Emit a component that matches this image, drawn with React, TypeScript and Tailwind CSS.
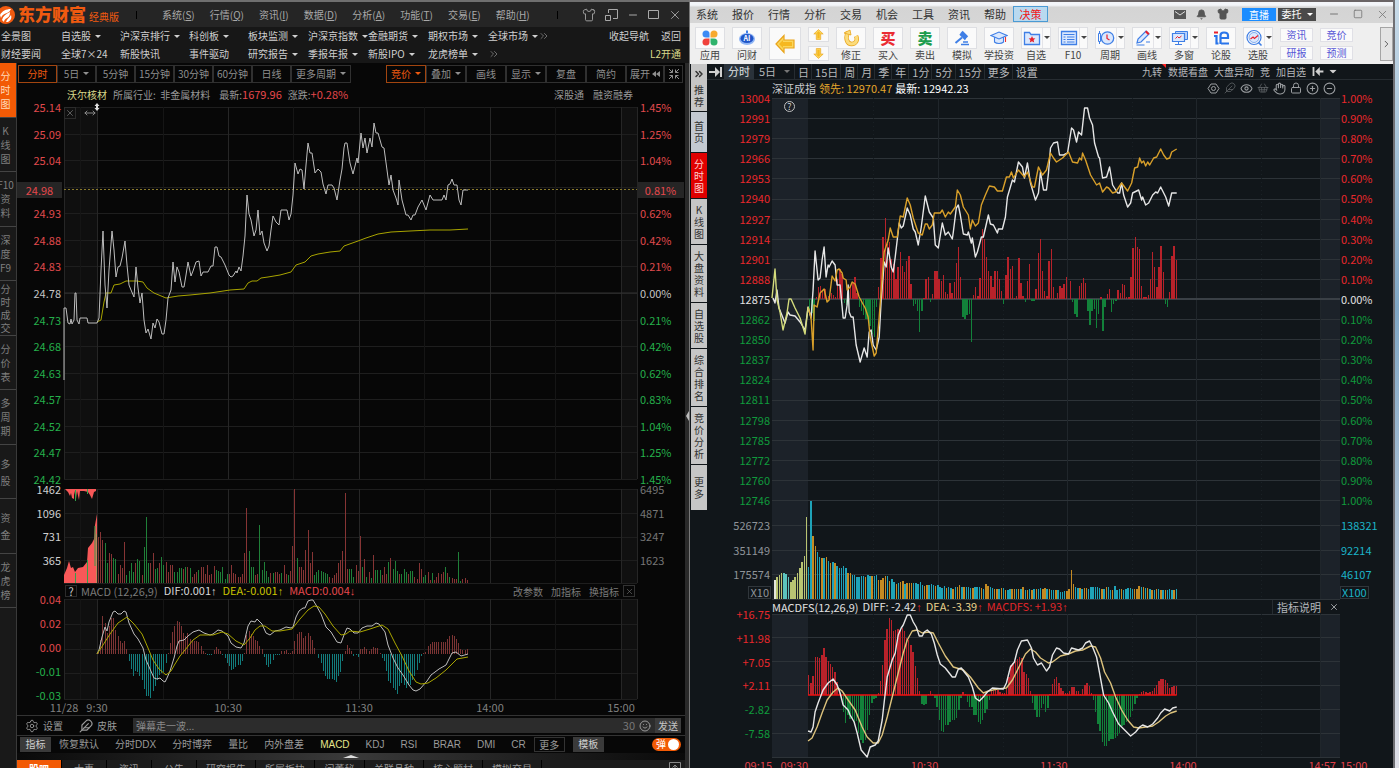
import React, { useState } from "react";
import {
  Bell,
  ChevronRight,
  ChevronsRight,
  CirclePlus,
  CircleMinus,
  Eye,
  Feather,
  Hand,
  Lock,
  Minus,
  MoveHorizontal,
  Settings,
  Shirt,
  ShoppingBasket,
  Smile,
  Square,
  X,
} from "lucide-react";

type NavItem = { label: string; menu?: boolean };

const range = (n: number) => Array.from({ length: n }, (_, i) => i);
const parse = (s: string) => s.trim().split(/\s+/);
const nums = (s: string) => parse(s).map(Number);

/* ---------- chart data ---------- */

const stockPrice =
  "64,380 64,308 66,308 68,323 70,324 71,319 72,324 74,320 75,293 76,293 77,320 79,324 80,318 87,318 88,323 97,323 99,318 101,270 103,231 105,285 107,308 109,270 112,231 114,250 116,277 118,267 120,266 122,258 125,241 127,265 129,285 131,290 134,297 136,267 138,288 140,303 142,293 144,320 146,333 148,329 151,339 153,323 155,328 157,319 159,322 162,334 164,334 166,320 168,298 171,290 173,262 175,282 177,267 179,272 182,287 184,287 186,275 188,262 191,276 193,271 196,262 199,261 201,276 203,272 208,272 211,266 213,266 215,247 217,247 219,256 221,257 225,265 229,275 231,277 233,276 236,271 237,273 239,267 241,271 243,256 245,236 247,195 249,214 251,220 254,236 256,230 258,210 260,235 262,231 264,243 267,251 269,246 271,230 273,216 276,222 279,225 281,210 287,210 289,220 291,214 293,195 295,163 298,174 300,169 302,170 304,189 306,165 308,143 310,153 312,153 315,173 318,169 321,172 323,184 326,194 328,185 332,185 334,188 337,200 340,180 342,169 344,148 345,143 347,143 350,163 353,174 357,158 358,163 361,133 363,148 365,138 367,153 370,138 372,147 374,123 376,133 378,133 382,147 384,148 387,170 389,185 391,175 393,190 396,198 398,205 399,180 402,200 406,215 408,215 411,220 413,215 415,215 418,207 422,200 426,210 430,195 433,200 442,200 444,195 446,200 448,185 450,184 452,179 454,185 457,185 459,200 461,205 463,190 468,190";

const stockAverage =
  "97,322 101,320 104,302 106,293 111,293 114,285 120,284 126,281 137,281 143,282 147,288 154,293 166,298 178,296 190,295 210,293 230,290 244,289 248,283 252,281 257,281 261,278 268,277 280,275 291,272 296,265 305,262 311,256 318,254 330,252 340,251 344,246 358,241 366,238 378,234 391,232 410,231 430,230 450,230 468,229";

const stockVolume =
  parse(`46r 51r 43r 40g 20g 30r 29r 25g 24g 9r 18r 15r 41r 8g 12g 20g 11g 20r 24g 22g 8r 36g 66g 20g 20r 30r 14g 15g 20r 26g
  18g 21r 11r 18r 18r 11g 11g 15g 15g 14r 16g 16r 15g 6r 9r 11r 13g 16r 16r 9r 18r 8r 9r 17r 13g 12g 11g 16g 4g 9g 9r 18r 10r 9r 6r 6r 9r
  30r 75r 32g 16g 16g 8r 9r 58g 13g 21g 12g 6g 10r 10g 11r 11r 9r 10g 18r 9r 8g 12r 37r 94r 25g 16r 16r 13r 33r 53r 20r 31r 8g 11g 13g 12g
  11g 10g 9g 6r 5r 8r 10r 20r 23r 32r 90r 14r 14g 14g 6g 18r 12r 47r 16g 24r 6g 11r 5g 28r 13g 13g 13g 8r 16r 9r 21g 25r 14g 22g 12g 9r 9g
  14g 11g 9r 12g 12g 6r 4r 20r 14r 6g 8g 11r 3r 10g 3r 6r 10r 9r 11r 16g 10r 6g 5r 4r 4r 31g 2g 4r 5r 3r`);

const stockMacd =
  nums(`2 14 38 31 21 28 36 36 24 18 13 11 13 5 -7 -15 -22 -17 -18 -22 -26 -35 -42 -42 -44 -37 -32 -26 -21 -19 -18 -9 1 11 22 28
  33 32 28 21 18 21 15 14 13 13 12 8 3 1 -1 -1 -1 4 7 5 3 -1 -4 -9 -12 -16 -15 -13 -11 -11 -7 1 19 23 20 18 14 13 8 5 -3 -11 -13 -10 -6 -1
  -1 -1 3 3 4 1 1 3 13 20 22 22 16 18 21 18 14 6 0 -4 -9 -17 -22 -25 -25 -25 -26 -28 -22 -18 -7 3 9 6 3 -2 -1 -3 5 5 7 5 3 5 7 6 6 1 -4 -7
  -17 -27 -29 -34 -36 -40 -32 -29 -31 -34 -31 -31 -26 -22 -16 -9 -2 1 2 8 10 12 12 12 12 12 12 12 15 18 19 18 15 11 5 4 4 5`);

const stockDif =
  "97,654 99,650 102,637 105,627 107,631 109,622 113,612 115,611 118,614 121,614 124,611 126,612 129,623 134,634 138,639 143,648 146,660 150,669 154,678 157,679 160,678 163,681 165,682 167,678 170,671 174,658 177,646 179,641 184,640 188,636 193,632 199,630 204,633 210,635 213,634 218,630 222,631 228,636 231,643 236,647 241,648 244,643 248,626 251,621 255,622 257,619 262,624 266,633 270,635 275,631 280,630 286,627 291,628 293,627 296,617 299,611 303,608 305,608 308,601 311,600 313,600 316,605 321,614 326,627 331,632 337,642 341,643 344,635 347,628 350,629 354,633 358,633 362,628 367,626 372,626 376,623 379,624 382,628 385,632 388,645 393,658 398,668 403,675 409,685 413,690 416,691 420,689 427,681 431,675 439,669 446,665 452,653 456,652 461,656 468,654";

const stockDea =
  "97,654 103,645 110,634 118,623 127,617 134,624 142,634 148,648 153,660 159,669 166,675 171,671 175,664 180,656 185,650 193,640 200,635 213,635 222,632 228,634 236,641 244,645 250,638 255,630 260,626 265,626 272,631 280,631 292,629 300,619 308,610 314,606 319,607 325,614 333,626 341,635 346,634 350,631 360,632 370,629 382,625 388,629 395,643 402,656 409,671 416,682 421,684 428,683 436,678 446,670 452,664 457,659 468,657";

const indexPrice =
  "773,298 775,303 777,290 779,308 785,323 788,312 790,315 795,316 800,322 805,330 808,307 811,318 813,290 815,251 818,280 820,278 822,260 824,247 826,277 828,265 829,267 832,261 835,265 837,285 840,285 843,318 845,318 847,305 848,285 849,312 851,317 853,317 856,345 860,362 864,348 867,357 869,332 871,330 873,345 876,350 879,337 881,300 884,262 886,267 888,248 891,267 893,272 895,257 899,223 901,228 903,226 907,208 910,215 913,229 915,232 918,245 921,227 925,196 929,212 933,218 935,245 938,248 942,223 945,235 948,232 952,239 953,232 956,208 958,205 960,215 963,234 967,235 968,232 971,243 972,238 975,257 977,252 981,237 983,237 988,215 990,224 993,225 997,233 998,229 1002,229 1005,217 1007,197 1012,180 1014,182 1018,162 1022,167 1024,178 1027,163 1030,183 1035,200 1038,193 1040,172 1043,190 1046,190 1048,173 1050,148 1053,143 1057,142 1059,155 1063,155 1067,153 1071,128 1073,130 1076,142 1078,132 1081,135 1084,108 1087,108 1089,118 1092,125 1094,143 1098,157 1099,158 1102,178 1106,177 1109,167 1112,185 1117,193 1119,193 1121,183 1123,195 1127,207 1130,203 1132,193 1138,190 1141,200 1142,197 1145,205 1148,203 1152,195 1155,192 1157,193 1160,187 1165,197 1168,206 1171,193 1176,193";

const indexAuction =
  "772,298 775,269 777,300 780,312 783,330 787,313 789,299 791,299 795,308 800,318 805,334 808,307";

const indexLead =
  "808,307 811,318 813,350 814,305 817,307 820,293 824,289 827,302 829,300 832,276 835,281 837,270 839,269 842,273 843,278 846,280 847,290 850,287 852,282 855,284 859,297 865,308 868,317 870,337 874,356 876,353 879,317 882,277 884,252 888,240 890,228 893,237 897,237 900,216 903,217 907,198 910,205 913,218 918,233 922,235 925,224 927,224 929,229 932,225 934,213 940,213 942,210 945,217 948,212 950,214 955,207 957,190 960,195 963,207 968,215 970,229 972,220 975,226 978,223 981,205 985,195 989,186 994,187 997,191 1002,191 1006,177 1009,177 1011,172 1013,178 1018,170 1024,177 1027,172 1032,187 1034,187 1038,167 1042,175 1046,170 1050,153 1053,158 1056,162 1062,158 1068,152 1072,162 1077,163 1079,158 1081,160 1082,153 1085,160 1090,175 1096,185 1099,183 1102,192 1106,187 1108,188 1112,193 1115,192 1121,183 1124,187 1127,191 1131,183 1134,168 1137,167 1139,158 1141,163 1143,161 1145,166 1147,162 1149,165 1153,158 1156,157 1160,149 1163,155 1166,159 1169,158 1171,152 1176,149";

const indexStrength =
  nums(`-12 -14 -22 2 12 13 9 10 0 3 6 4 2 20 30 25 -4 -6 -5 12 16 22 6 -8 -12 -16 -20 -20 -27 -35 -38 -8 12 41 62 81 55 57 40 35
  20 32 47 33 27 38 43 15 -7 -5 -12 -33 -12 1 20 22 -3 5 28 28 20 18 24 7 5 16 6 17 36 52 22 -18 -20 -16 -15 -43 4 12 3 21 70 60 42 28 23 12
  28 28 20 8 -5 24 42 30 33 1 3 41 16 3 -3 18 35 -2 -2 10 46 60 28 8 3 38 50 12 1 6 13 11 15 22 0 18 -3 -15 -18 13 16 21 16 -12 -26 -12 -10
  -29 -15 2 -32 -8 5 10 -13 -5 -2 9 6 15 14 2 2 22 51 62 52 50 13 2 2 4 20 47 32 12 32 53 27 -5 -8 7 43 53 39`);

const auctionVolume = parse(
  "19w 22y 24y 26y 26t 25t 22t 17y 19y 22y 26y 31y 37y 43y 82y"
);

const indexVolume =
  parse(`32c 99c 63o 53o 47c 42c 41o 41c 42o 38c 36o 37c 36o 33c 31c 31c 33c 31c 26o 26o 24c 24c 22c 22c 23c 23c 22o 24c 23c 23o 23c
  24c 19o 19o 21o 23o 23c 18o 20c 17c 15o 16c 17o 18o 15c 16o 16o 16o 16c 16c 15c 17c 14c 13o 14o 14c 15c 14c 13o 14c 12c 11c 13c 11o 12c
  11c 10o 12c 12o 14o 12c 12o 12c 12c 11c 11o 12c 12c 12c 11o 10c 15o 13o 12c 11c 10o 10o 10c 11o 11c 9o 9c 10c 10o 10o 10c 10o 10c 12o
  9c 9o 10c 9o 10c 10o 10c 11c 10o 11o 10c 10o 9c 9c 9o 9c 7c 7c 8c 8o 10o 29o 15o 12c 11c 11o 10c 11o 11o 10c 12c 12c 12c 12c 11c 10o
  10c 12o 12c 9c 9o 13c 9c 10c 10o 9c 10c 11c 11c 10c 10o 10o 13o 12c 12o 11c 11o 10c 9o 9c 10o 10c 9o 9c 9o 9c 10c 9c 9o 10c`);

const indexMacd =
  nums(`20 12 19 38 38 37 40 47 38 34 31 28 23 13 6 -4 -17 -28 -20 -24 -24 -28 -26 -38 -45 -48 -45 -35 -20 -8 -4 -3 2 14 30 55 66
  77 75 64 65 66 65 67 64 57 55 50 43 29 17 4 -9 -10 -9 1 4 1 -3 -12 -25 -36 -37 -30 -30 -27 -25 -25 -23 -15 -3 3 1 -7 -12 -12 -20 -20 -27 -29
  -25 -18 -14 -5 5 4 5 5 3 2 2 6 18 30 32 34 36 38 37 23 21 17 4 -8 -15 -22 -22 -13 -9 -17 -13 1 11 16 18 12 7 4 2 2 4 8 8 4 4 1 6 10 12 9
  2 -5 -17 -29 -36 -47 -51 -51 -46 -44 -44 -43 -41 -38 -31 -30 -27 -26 -22 -16 -9 -3 1 3 4 3 2 3 4 7 10 14 16 16 15 12 7 8 9 9`);

const indexDiff =
  "808,731 811,732 813,727 815,712 818,703 823,690 828,683 833,679 837,685 840,693 843,705 848,710 850,715 854,722 857,733 861,750 867,757 870,747 875,745 878,741 882,720 884,702 887,677 892,660 895,653 898,635 901,628 903,625 907,615 910,615 913,622 916,627 919,636 922,636 924,632 927,630 931,634 934,643 937,655 940,664 945,668 952,677 955,677 958,669 961,668 964,672 968,677 972,687 975,698 979,701 983,697 987,692 992,688 1003,689 1006,683 1010,667 1014,662 1017,650 1021,641 1027,640 1031,648 1033,658 1037,665 1041,663 1046,671 1049,667 1052,655 1056,648 1059,649 1063,653 1068,654 1071,648 1078,650 1082,648 1085,643 1089,641 1092,647 1096,657 1099,673 1103,695 1108,703 1112,712 1118,724 1123,729 1130,736 1135,732 1139,727 1142,725 1147,727 1152,724 1157,718 1160,713 1164,709 1169,711 1172,708 1176,707";

const indexDea =
  "808,741 812,738 817,727 822,713 827,700 833,692 838,688 842,691 848,700 855,710 862,727 867,737 873,743 878,743 882,735 887,717 892,697 897,677 903,653 907,640 912,631 917,630 922,633 928,632 933,633 938,643 945,656 953,667 963,670 970,677 978,688 983,693 988,691 997,689 1006,688 1012,680 1018,668 1025,654 1030,649 1035,652 1040,658 1048,663 1052,662 1060,656 1068,654 1075,651 1082,650 1090,646 1095,647 1100,658 1104,672 1110,683 1115,697 1121,710 1127,720 1133,727 1138,728 1152,726 1158,722 1165,716 1170,713 1176,711";

const barColors: Record<string, string> = {
  r: "#863434",
  g: "#1f8038",
  c: "#1fa3b8",
  o: "#c48a22",
  w: "#e4e6dc",
  y: "#b9c472",
  t: "#5cc3bd",
};

/* ---------- chart pieces ---------- */

type PlotProps = {
  box: [number, number, number, number];
  children: React.ReactNode;
};

const Plot = ({ box, children }: PlotProps) => (
  <svg
    className="block h-full w-full overflow-visible"
    viewBox={box.join(" ")}
    preserveAspectRatio="none"
    aria-hidden="true"
  >
    {children}
  </svg>
);

type LineProps = { points: string; color: string; width?: number };

const Line = ({ points, color, width = 1 }: LineProps) => (
  <polyline
    points={points}
    fill="none"
    stroke={color}
    strokeWidth={width}
    strokeLinejoin="round"
    vectorEffect="non-scaling-stroke"
  />
);

type SignedBarsProps = {
  values: number[];
  from: number;
  to: number;
  base: number;
  up: string;
  down: string;
  width?: number;
};

const SignedBars = ({ values, from, to, base, up, down, width = 1 }: SignedBarsProps) => {
  const step = (to - from) / values.length;
  return (
    <g shapeRendering="crispEdges">
      {values.map((v, i) => (
        <rect
          key={i}
          x={from + i * step}
          y={v > 0 ? base - v : base}
          width={width}
          height={Math.abs(v)}
          fill={v > 0 ? up : down}
        />
      ))}
    </g>
  );
};

type VolumeBarsProps = {
  values: string[];
  from: number;
  to: number;
  base: number;
  width?: number;
};

const VolumeBars = ({ values, from, to, base, width = 1 }: VolumeBarsProps) => {
  const step = (to - from) / values.length;
  return (
    <g shapeRendering="crispEdges">
      {values.map((v, i) => {
        const h = parseInt(v, 10);
        return (
          <rect
            key={i}
            x={from + i * step}
            y={base - h}
            width={width}
            height={h}
            fill={barColors[v.slice(-1)]}
          />
        );
      })}
    </g>
  );
};

const StockGrid = ({ top, bottom, rows }: { top: number; bottom: number; rows: number[] }) => (
  <g shapeRendering="crispEdges">
    <rect x="64" y={top} width="33" height={bottom - top} fill="#0f0f0f" />
    <rect x="621" y={top} width="16" height={bottom - top} fill="#101010" />
    {rows.map((y) => (
      <line key={y} x1="64" x2="637" y1={y} y2={y} stroke="#1e1e1e" />
    ))}
    {[80, 163, 293, 424, 555].map((x) => (
      <line key={x} x1={x} x2={x} y1={top} y2={bottom} stroke="#151515" />
    ))}
    {[64, 97, 228, 359, 490, 621, 637].map((x) => (
      <line key={x} x1={x} x2={x} y1={top} y2={bottom} stroke="#262626" />
    ))}
  </g>
);

const IndexGrid = ({ top, bottom, rows }: { top: number; bottom: number; rows: number[] }) => (
  <g shapeRendering="crispEdges">
    <rect x="772" y={top} width="36" height={bottom - top} fill="#1c2229" />
    <rect x="1320" y={top} width="19" height={bottom - top} fill="#1c2229" />
    {rows.map((y) => (
      <line key={y} x1="772" x2="1339" y1={y} y2={y} stroke="#2d3338" />
    ))}
    {[938, 1067, 1196, 1320].map((x) => (
      <line key={x} x1={x} x2={x} y1={top} y2={bottom} stroke="#20262b" />
    ))}
    {[873, 1003, 1132, 1261].map((x) => (
      <line key={x} x1={x} x2={x} y1={top} y2={bottom} stroke="#192025" strokeDasharray="1 3" />
    ))}
  </g>
);

type AxisProps = {
  labels: string[];
  tones: (i: number) => string;
  side: "left" | "right";
  className: string;
  children?: React.ReactNode;
};

/* Every label has no height of its own, so its middle lies on its grid line. */
const Axis = ({ labels, tones, side, className, children }: AxisProps) => (
  <div className={`relative flex shrink-0 flex-col justify-between text-[11px] leading-[10px] ${className}`}>
    {labels.map((label, i) => (
      <div
        key={i}
        className={`flex h-0 items-center whitespace-nowrap ${side === "left" ? "justify-end" : ""} ${tones(i)}`}
      >
        {label}
      </div>
    ))}
    {children}
  </div>
);

const Caret = ({ className = "" }: { className?: string }) => (
  <svg viewBox="0 0 6 3" className={`h-[3px] w-[6px] shrink-0 ${className}`} aria-hidden="true">
    <path d="M0 0h6L3 3z" fill="currentColor" />
  </svg>
);

/* ---------- left application ---------- */

const stockMenus = [
  ["系统", "S"],
  ["行情", "Q"],
  ["资讯", "I"],
  ["数据", "D"],
  ["分析", "A"],
  ["功能", "T"],
  ["交易", "E"],
  ["帮助", "H"],
];

const navRows: NavItem[][] = [
  [
    { label: "全景图" },
    { label: "自选股", menu: true },
    { label: "沪深京排行", menu: true },
    { label: "科创板", menu: true },
    { label: "板块监测", menu: true },
    { label: "沪深京指数", menu: true },
    { label: "金融期货", menu: true },
    { label: "期权市场", menu: true },
    { label: "全球市场", menu: true },
  ],
  [
    { label: "财经要闻" },
    { label: "全球7×24" },
    { label: "新股快讯" },
    { label: "事件驱动" },
    { label: "研究报告", menu: true },
    { label: "季报年报", menu: true },
    { label: "新股IPO", menu: true },
    { label: "龙虎榜单", menu: true },
  ],
];

const stockSide = [
  ["分", "时", "图"],
  ["K", "线", "图"],
  ["F10", "资", "料"],
  ["深", "度", "F9"],
  ["分", "时", "成", "交"],
  ["分", "价", "表"],
  ["多", "周", "期"],
  ["多", "股"],
  ["资", "金"],
  ["龙", "虎", "榜"],
];

const stockLevels = [
  "25.14", "25.09", "25.04", "", "24.93", "24.88", "24.83", "24.78",
  "24.73", "24.68", "24.63", "24.57", "24.52", "24.47", "24.42",
];
const stockPercents = [
  "1.45%", "1.25%", "1.04%", "", "0.62%", "0.42%", "0.21%", "0.00%",
  "0.21%", "0.42%", "0.62%", "0.83%", "1.04%", "1.25%", "1.45%",
];

const stockTone = (i: number) =>
  i < 7 ? "text-[#e04a4d]" : i === 7 ? "text-[#c4c4c4]" : "text-[#25b04b]";

const periods: NavItem[] = [
  { label: "分时" },
  { label: "5日", menu: true },
  { label: "5分钟" },
  { label: "15分钟" },
  { label: "30分钟" },
  { label: "60分钟" },
  { label: "日线" },
];
const chartTools: NavItem[] = [
  { label: "竞价", menu: true },
  { label: "叠加", menu: true },
  { label: "画线" },
  { label: "显示", menu: true },
  { label: "复盘" },
  { label: "简约" },
];

const FlameLogo = () => (
  <svg viewBox="0 0 18 18" className="-ml-[3px] h-[18px] w-[18px] shrink-0" aria-hidden="true">
    <circle cx="9" cy="9" r="9" fill="#f05a10" />
    <path d="M3 9C5 5 9 3 14 3c-1 2-2 3-4 4-3 1-5 2-6 5z" fill="#fff" />
    <path d="M5 14c1-4 4-6 8-8 0 3-1 5-3 6-2 1-3 2-3 4z" fill="#fff" />
    <path d="M9 16c1-3 3-4 5-7 1 3 0 5-3 7z" fill="#fff" />
  </svg>
);

const StockTitleBar = () => (
  <header className="flex h-[27px] shrink-0 items-center border-t-2 border-[#6f6f6f] bg-[#252525] text-[10px] text-[#a9a9a9]">
    <FlameLogo />
    <h1 className="ml-[3px] font-['Noto_Serif','Noto_Sans_CJK_SC',serif] text-[17px] font-black leading-none text-[#f05a10]">
      东方财富
    </h1>
    <span className="ml-[3px] mt-1 text-[#f05a10]">经典版</span>
    <span className="ml-[17px] h-2 w-px bg-black" />
    <nav className="ml-[25px] flex gap-[15px]">
      {stockMenus.map(([name, key]) => (
        <button key={key} className="whitespace-nowrap">
          {name}(<span className="underline">{key}</span>)
        </button>
      ))}
    </nav>
    <span className="ml-auto mr-6 h-2 w-px bg-black" />
    <div className="mr-[7px] flex items-center gap-[9px]">
      <button aria-label="换肤"><Shirt size={14} strokeWidth={1.5} /></button>
      <button aria-label="小窗">
        <svg viewBox="0 0 13 13" className="size-[13px]" fill="none" stroke="currentColor" aria-hidden="true">
          <path d="M3.500 5V1.500h9v9H8M.5 7.500h5v5h-5z" />
        </svg>
      </button>
      <button aria-label="最小化"><Minus size={12} /></button>
      <button aria-label="最大化">
        <svg viewBox="0 0 11 11" className="size-[11px]" fill="none" stroke="currentColor" aria-hidden="true">
          <path d="M.5 1.500h10v8H.5z" />
        </svg>
      </button>
      <button aria-label="关闭"><X size={14} strokeWidth={1.5} /></button>
    </div>
  </header>
);

const StockNav = () => (
  <div className="flex h-9 shrink-0 flex-col justify-center gap-[2px] bg-[#171717] text-[10px] leading-4 text-[#cfcfcf]">
    {navRows.map((row, r) => (
      <div key={r} className="flex items-center">
        <nav className="grid grid-cols-[60px_59px_69px_59px_60px_60px_60px_60px_auto_auto] pl-px">
          {row.map((item) => (
            <button key={item.label} className="flex items-center gap-1 whitespace-nowrap">
              {item.label}
              {item.menu && <Caret />}
            </button>
          ))}
          <button aria-label="更多导航" className="flex items-center text-[#8a8a8a]">
            <ChevronsRight size={12} strokeWidth={1.5} />
          </button>
        </nav>
        <div className="ml-auto flex gap-3 pr-2">
          {r === 0 ? (
            <>
              <button>收起导航</button>
              <button>返回</button>
            </>
          ) : (
            <button className="text-[#d9d98a]">L2开通</button>
          )}
        </div>
      </div>
    ))}
  </div>
);

const StockSidebar = () => (
  <nav className="w-[17px] shrink-0 overflow-hidden border-r border-[#3a3a3a] bg-[#191919] text-[10px] text-[#7f7f7f]">
    {stockSide.map((chars, i) => (
      <button
        key={i}
        className={`flex w-full flex-col items-center justify-center border-b border-[#444] pr-[5px] ${
          i % 2 ? "h-[54px]" : "h-[55px]"
        } ${chars.length > 3 ? "leading-[13px]" : chars.length < 3 ? "leading-[17px]" : "leading-[14px]"} ${
          i === 0 ? "bg-[#f25a05] text-[#ffd9b8]" : ""
        }`}
      >
        {chars.map((c) => (
          <span key={c}>{c}</span>
        ))}
      </button>
    ))}
  </nav>
);

type ToolButtonProps = { item: NavItem; active?: boolean; wide?: boolean };

const ToolButton = ({ item, active, wide }: ToolButtonProps) => (
  <button
    className={`flex h-[18px] items-center justify-center gap-1 whitespace-nowrap border ${wide ? "w-10" : "w-[39px]"} ${
      active ? "border-[#a2450f] text-[#ee5a10]" : "border-[#303030]"
    }`}
  >
    {item.label}
    {item.menu && <Caret />}
  </button>
);

const StockToolbar = () => (
  <div className="flex h-[21px] shrink-0 items-center pl-px pr-0.5 text-[10px] text-[#8f8f8f]">
    {periods.map((p, i) => (
      <ToolButton key={p.label} item={p} active={i === 0} />
    ))}
    <button className="flex h-[18px] w-[60px] items-center justify-center gap-1 border border-[#303030]">
      更多周期
      <Caret />
    </button>
    <div className="ml-auto flex">
      {chartTools.map((p, i) => (
        <ToolButton key={p.label} item={p} active={i === 0} wide />
      ))}
      <button className="flex h-[18px] w-[38px] items-center justify-center gap-0.5 border border-[#303030]">
        展开
        <svg viewBox="0 0 8 6" className="h-[6px] w-2" aria-hidden="true">
          <path d="M4 0v6L0 3zM8 0v6L4 3z" fill="currentColor" />
        </svg>
      </button>
      <button aria-label="缩小" className="flex h-[18px] w-[19px] items-center justify-center border border-[#303030]">
        <svg viewBox="0 0 12 12" className="size-3" fill="none" stroke="currentColor" aria-hidden="true">
          <path d="M1 1l3.500 3.500M11 1L7.500 4.500M1 11l3.500-3.500M11 11L7.500 7.500M4.500 1.500v3h-3M7.500 1.500v3h3M4.500 10.500v-3h-3M7.500 10.500v-3h3" />
        </svg>
      </button>
    </div>
  </div>
);

const StockInfo = () => (
  <div className="flex h-[23px] shrink-0 items-center pb-0.5 pl-[50px] pr-[52px] text-[10px] text-[#989898]">
    <span className="text-[#d9d98a]">沃尔核材</span>
    <span className="ml-[6px]">所属行业:&nbsp; 非金属材料</span>
    <span className="ml-[9px]">
      最新:<span className="text-[11px] text-[#e5484c]">1679.96</span>
    </span>
    <span className="ml-[6px]">
      涨跌:<span className="text-[11px] text-[#e5484c]">+0.28%</span>
    </span>
    <span className="ml-auto">深股通</span>
    <span className="ml-[9px]">融资融券</span>
  </div>
);

/* last price, as a share of the plot's height from the top */
const lastPriceAt = 22.2;

const StockPriceChart = () => (
  <div className="flex min-h-0 flex-[372]">
    <Axis labels={stockLevels} tones={stockTone} side="left" className="w-[47px] pr-[3px]">
      <span
        className="absolute left-0 right-0.5 flex h-4 -translate-y-1/2 items-center justify-center bg-[#252525] text-[#e5484c]"
        style={{ top: `${lastPriceAt}%` }}
      >
        24.98
      </span>
    </Axis>
    <div className="relative min-w-0 flex-1">
      <Plot box={[64, 107, 573, 372]}>
        <StockGrid top={107} bottom={479} rows={range(15).map((i) => 107 + Math.round(i * 26.571))} />
        <line x1="64" x2="637" y1="293" y2="293" stroke="#333" />
        <line x1="64" x2="637" y1="189.500" y2="189.500" stroke="#8a7a2c" strokeDasharray="2 2" />
        <Line points={stockAverage} color="#a8a400" />
        <Line points={stockPrice} color="#bdbdbd" />
      </Plot>
      <div className="absolute left-0 top-0 flex gap-2 text-[#888]">
        <button aria-label="关闭竞价" className="flex size-3 items-center justify-center border border-[#2b2b2b]">
          <X size={10} strokeWidth={1.5} />
        </button>
        <MoveHorizontal size={12} strokeWidth={2} />
      </div>
      <svg viewBox="0 0 6 8" className="absolute -top-1 left-[30px] h-2 w-[6px]" aria-hidden="true">
        <path d="M3 0l2.500 3h-1.500v2h1.500L3 8 .5 5H2V3H.5z" fill="#ddd" />
      </svg>
    </div>
    <Axis labels={stockPercents} tones={stockTone} side="right" className="w-12 pl-[3px]">
      <span
        className="absolute left-0 right-px flex h-4 -translate-y-1/2 items-center justify-center bg-[#252525] text-[#e5484c]"
        style={{ top: `${lastPriceAt}%` }}
      >
        0.81%
      </span>
    </Axis>
  </div>
);

const StockVolumeChart = () => (
  <div className="mt-[10px] flex min-h-0 flex-[94]">
    <Axis
      labels={["1462", "1096", "731", "365", ""]}
      tones={() => "text-[#d0d0d0]"}
      side="left"
      className="w-[47px] pr-[3px]"
    />
    <div className="min-w-0 flex-1">
      <Plot box={[64, 489, 573, 94]}>
        <StockGrid top={489} bottom={583} rows={[489, 513, 537, 560, 583]} />
        <path
          d="M64 583V575L67 568 69 561 71 568 73 567 75 572 78 568 83 567 87 562 88 548 92 543 94 539 95 525 97 514V583z"
          fill="#f85858"
        />
        <path
          d="M65 489L68 492 70 496 71 493 72 498 74 499 74 491 76 499 77 491 79 500 80 491 84 491 88 492 90 495 92 499 94 492 96 491V489z"
          fill="#f85858"
        />
        <path d="M75.500 573v10M87.500 560v23M95 526v40M75.500 490v11M87.500 489v5" stroke="#33a04a" />
        <path d="M96.500 534v49" stroke="#c08a5a" />
        <VolumeBars values={stockVolume} from={98} to={469} base={583} />
      </Plot>
    </div>
    <Axis
      labels={["6495", "4871", "3247", "1623", ""]}
      tones={() => "text-[#767676]"}
      side="right"
      className="w-12 pl-[3px]"
    />
  </div>
);

const Arrow = ({ children }: { children: React.ReactNode }) => (
  <span className="font-['Liberation_Sans',sans-serif]">{children}</span>
);

const StockMacd = () => (
  <>
    <div className="ml-[47px] mr-12 flex h-4 shrink-0 items-center whitespace-nowrap text-[11px] text-[#7a7a7a]">
      <button aria-label="指标帮助" className="ml-px mr-1 flex size-3 items-center justify-center border border-[#2b2b2b] text-[#ccc]">
        ?
      </button>
      <span>MACD (12,26,9)</span>
      <span className="ml-[6px] text-[#d8d8d8]">DIF:0.001<Arrow>↑</Arrow></span>
      <span className="ml-[6px] text-[#c9c400]">DEA:-0.001<Arrow>↑</Arrow></span>
      <span className="ml-[6px] text-[#e5484c]">MACD:0.004<Arrow>↓</Arrow></span>
      <div className="ml-auto flex items-center gap-2 text-[10px]">
        <button>改参数</button>
        <button>加指标</button>
        <button>换指标</button>
      </div>
      <button aria-label="关闭指标" className="ml-1 mr-0.5 flex size-3 items-center justify-center border border-[#333]">
        <X size={9} strokeWidth={1.5} />
      </button>
    </div>
    <div className="flex min-h-0 flex-[100]">
      <Axis
        labels={["0.04", "0.02", "0.00", "-0.01", "-0.03"]}
        tones={(i) => (i < 3 ? "text-[#e04a4d]" : "text-[#25b04b]")}
        side="left"
        className="w-[47px] pb-1 pr-[3px]"
      />
      <div className="min-w-0 flex-1">
        <Plot box={[64, 599, 573, 100]}>
          <StockGrid top={599} bottom={699} rows={[599, 624, 649, 673, 699]} />
          <SignedBars values={stockMacd} from={98} to={469} base={654} up="#7c3434" down="#127c7c" />
          <Line points={stockDif} color="#bdbdbd" />
          <Line points={stockDea} color="#aaa600" />
        </Plot>
      </div>
      <div className="w-12 shrink-0" />
    </div>
    <div className="ml-[47px] mr-12 grid h-4 shrink-0 grid-cols-[33fr_131fr_131fr_131fr_131fr_16fr] items-center text-[11px] text-[#808080]">
      {["11/28", "9:30", "10:30", "11:30", "14:00", "15:00"].map((t) => (
        <span key={t} className="flex w-0 justify-center">
          {t}
        </span>
      ))}
    </div>
  </>
);

const DanmuBar = () => (
  <div className="flex h-5 shrink-0 items-center border-t border-[#333] pr-1 text-[10px] text-[#9a9a9a]">
    <button className="ml-2 flex items-center gap-1">
      <Settings size={14} strokeWidth={1.5} />
      设置
    </button>
    <button className="ml-4 flex items-center gap-1">
      <Feather size={14} strokeWidth={2} />
      皮肤
    </button>
    <div className="ml-4 flex h-[15px] min-w-0 flex-1 items-center bg-[#2c2c2c]">
      <input
        aria-label="弹幕"
        placeholder="弹幕走一波..."
        className="h-full min-w-0 flex-1 bg-transparent pl-[3px] text-[10px] outline-none placeholder:text-[#8a8a8a]"
      />
      <span className="text-[11px] text-[#777]">30</span>
      <button aria-label="表情" className="mx-1"><Smile size={12} /></button>
      <button className="h-full bg-[#3c3c3c] px-[3px] text-[#c4c4c4]">发送</button>
    </div>
  </div>
);

const IndicatorTabs = () => {
  const [danmu, setDanmu] = useState(true);

  return (
    <div className="flex h-[18px] shrink-0 items-center border-t border-[#333] pl-[3px] pr-1 font-['Liberation_Sans','Noto_Sans_CJK_SC',sans-serif] text-[10px] text-[#9a9a9a]">
      <button className="h-[15px] w-[31px] bg-[#3a3a3a] text-[#d0d0d0]">指标</button>
      <div className="ml-2 flex gap-4 whitespace-nowrap">
        <button>恢复默认</button>
        <button>分时DDX</button>
        <button>分时博弈</button>
        <button>量比</button>
        <button>内外盘差</button>
        <button className="text-[#e4e48c]">MACD</button>
        <button>KDJ</button>
        <button>RSI</button>
        <button>BRAR</button>
        <button>DMI</button>
        <button>CR</button>
      </div>
      <button className="ml-2 h-[15px] w-[31px] border border-[#333]">更多</button>
      <button className="ml-2 h-[15px] w-[31px] bg-[#3a3a3a] text-[#d0d0d0]">模板</button>
      <label className="ml-auto flex h-[13px] items-center gap-0.5 rounded-full bg-[#f25a05] pl-1 pr-0.5 text-white">
        弹
        <input
          type="checkbox"
          checked={danmu}
          onChange={(e) => setDanmu(e.target.checked)}
          className="size-[11px] appearance-none rounded-full bg-white"
        />
      </label>
    </div>
  );
};

const BottomTabs = () => (
  <>
    <div className="flex h-[7px] shrink-0 items-start justify-center bg-linear-to-r from-[#0a0a0a] via-[#3a3a3a] to-[#0a0a0a] pt-0.5">
      <svg viewBox="0 0 16 3" className="h-[3px] w-4" aria-hidden="true">
        <path d="M0 3L8 0l8 3z" fill="#ddd" />
      </svg>
    </div>
    <div className="flex h-2 shrink-0 overflow-hidden bg-[#1c1c1c] text-[10px] leading-[18px] text-[#9a9a9a]">
      {["股吧", "大事", "资讯", "公告", "研究报告", "所属板块", "问董秘", "关联品种", "核心题材", "模拟交易"].map(
        (t, i) => (
          <button
            key={t}
            className={`h-[18px] whitespace-nowrap border-r border-black ${
              t.length === 2 ? "w-[45px]" : t.length === 3 ? "w-[50px]" : "w-[59px]"
            } ${i === 0 ? "bg-[#f25a05] font-bold text-white" : ""}`}
          >
            {t}
          </button>
        )
      )}
      <svg viewBox="0 0 12 12" className="ml-auto mr-1 mt-0.5 size-3" fill="none" stroke="#8a8a8a" aria-hidden="true">
        <path d="M.5 .5h11v11H.5zM6 9V3M3.500 5.500L6 3l2.500 2.500" />
      </svg>
    </div>
  </>
);

const StockApp = () => (
  <section className="flex min-h-0 min-w-0 bg-[#070707]">
    <div className="flex min-w-0 flex-1 flex-col">
      <StockTitleBar />
      <StockNav />
      <div className="flex min-h-0 flex-1">
        <StockSidebar />
        <main className="flex min-w-0 flex-1 flex-col">
          <StockToolbar />
          <StockInfo />
          <StockPriceChart />
          <StockVolumeChart />
          <StockMacd />
          <DanmuBar />
          <IndicatorTabs />
          <BottomTabs />
        </main>
        <div className="flex w-1 shrink-0 items-center justify-end bg-[#2a2a2a]">
          <svg viewBox="0 0 3 10" className="h-[10px] w-[3px]" aria-hidden="true">
            <path d="M3 0v10L0 5z" fill="#bbb" />
          </svg>
        </div>
      </div>
    </div>
    <div className="w-px shrink-0 bg-[#777]" />
  </section>
);

/* ---------- right application ---------- */

const indexMenus = ["系统", "报价", "行情", "分析", "交易", "机会", "工具", "资讯", "帮助"];

const IndexTitleBar = () => (
  <header className="flex h-[23px] shrink-0 items-center border-t-2 border-[#6a6466] bg-linear-to-b from-[#f3f5f9] from-15% via-[#d4d4d4] via-25% to-[#d6d6d6] pt-[3px] text-[11px] leading-4 text-[#333]">
    <nav className="flex gap-[14px] pl-[6px]">
      {indexMenus.map((m) => (
        <button key={m} className="whitespace-nowrap">
          {m}
        </button>
      ))}
    </nav>
    <button className="ml-[7px] h-4 w-[35px] border border-[#4a9ad4] bg-[#b9d9ef] leading-[14px] text-[#f01818]">决策</button>
    <div className="ml-auto flex items-center gap-[10px] text-[#555]">
      <button aria-label="邮件">
        <svg viewBox="0 0 12 9" className="h-[9px] w-3" aria-hidden="true">
          <path d="M0 0h12v9H0z" fill="#555" />
          <path d="M1 1.500l5 3.500 5-3.500" fill="none" stroke="#dcdcdc" />
        </svg>
      </button>
      <button aria-label="提醒"><Bell size={11} fill="#555" /></button>
      <button aria-label="皮肤"><Shirt size={12} fill="#555" /></button>
    </div>
    <button className="ml-[13px] h-[13px] w-[34px] bg-[#1a8cff] text-[10px] leading-[13px] text-white">直播</button>
    <button className="ml-0.5 flex h-[13px] w-[38px] items-center justify-center gap-[5px] bg-[#4a4a4a] text-[10px] text-white">
      委托
      <Caret />
    </button>
    <div className="flex items-center gap-[13px] pl-3 pr-1 text-[#777]">
      <button aria-label="最小化"><Minus size={12} /></button>
      <button aria-label="最大化"><Square size={10} /></button>
      <button aria-label="关闭"><X size={13} strokeWidth={1.5} /></button>
    </div>
  </header>
);

const blue = "#3f7fe6";

const AppsIcon = () => (
  <svg viewBox="0 0 18 18" className="size-[18px]" aria-hidden="true">
    <path d="M1.500 5a3.500 3.500 0 1 1 7 0v3.500H5A3.500 3.500 0 0 1 1.500 5z" fill="#3d8bf5" />
    <path d="M9.500 5a3.500 3.500 0 1 1 3.500 3.500H9.500z" fill="#f7a92d" />
    <path d="M5 9.500h3.500V13A3.500 3.500 0 1 1 5 9.500z" fill="#f0413c" />
    <path d="M9.500 9.500H13a3.500 3.500 0 1 1-3.500 3.500z" fill="#2fb36c" />
  </svg>
);
const RobotIcon = () => (
  <svg viewBox="0 0 18 18" className="size-[18px]" aria-hidden="true">
    <path d="M9 1.500v3" stroke={blue} strokeWidth="2" />
    <ellipse cx="9" cy="10" rx="8" ry="6" fill="#8fb5f5" />
    <ellipse cx="9" cy="9.500" rx="6.500" ry="4.500" fill="#1f55c8" />
    <text x="9" y="12" textAnchor="middle" fontSize="7" fontWeight="700" fill="#fff">AI</text>
  </svg>
);
const YellowArrow = ({ className }: { className: string }) => (
  <svg viewBox="0 0 20 20" className={className} aria-hidden="true">
    <path d="M1 10L9 1.500V6H19v8H9v4.500z" fill="#fbd65a" stroke="#e9a41c" strokeWidth="1.200" />
    <path d="M4 10l4-4v2h9v4H8v2z" fill="#f6b820" />
  </svg>
);
const HookIcon = () => (
  <svg viewBox="0 0 18 18" className="size-[18px]" fill="none" aria-hidden="true">
    <path d="M6 3C3 9 5 15 9.500 15 14 15 16 11 14 7" stroke="#e9a41c" strokeWidth="4.500" />
    <path d="M6 3C3 9 5 15 9.500 15 14 15 16 11 14 7" stroke="#fbdc7c" strokeWidth="3" />
    <path d="M2 4l6-3 1 5z" fill="#fbdc7c" stroke="#e9a41c" strokeWidth=".8" />
  </svg>
);
const HammerIcon = () => (
  <svg viewBox="0 0 18 18" className="size-[18px]" fill="none" stroke={blue} aria-hidden="true">
    <path d="M9 2.500l5.500 5.500M7 5l5.500 5.500M8 3.500l5.500 5.500" strokeWidth="1.800" />
    <path d="M9 8.500L2.500 14" strokeWidth="2" />
    <path d="M8 15.500h8M10 13h5" strokeWidth="1.300" />
  </svg>
);
const CapIcon = () => (
  <svg viewBox="0 0 18 18" className="size-[18px]" stroke={blue} strokeWidth="1.100" aria-hidden="true">
    <path d="M4.500 8v5c2 2 7 2 9 0V8" fill="#dbe8fd" />
    <path d="M1 6.500L9 3l8 3.500L9 10z" fill="#dbe8fd" />
    <path d="M15.500 8v5" stroke="#e33" />
  </svg>
);
const FolderIcon = () => (
  <svg viewBox="0 0 18 18" className="size-[18px]" aria-hidden="true">
    <path d="M1.500 3.500h5l1.500 2h8.500v10h-15z" fill="#dbe8fd" stroke={blue} strokeWidth="1.300" />
    <path d="M9 7l1 2.200 2.400.2-1.800 1.600.6 2.400L9 12.200l-2.200 1.200.6-2.400-1.800-1.600 2.400-.2z" fill="#e8202c" />
  </svg>
);
const SheetIcon = () => (
  <svg viewBox="0 0 18 18" className="size-[18px]" stroke={blue} fill="none" aria-hidden="true">
    <path d="M1.500 2.500h15v13h-15z" fill="#dbe8fd" strokeWidth="1.300" />
    <path d="M3.500 5.500h11M3.500 8h2M3.500 10.500h2M3.500 13h2M7 8h7.500M7 10.500h7.500M7 13h7.500" />
  </svg>
);
const ClockIcon = () => (
  <svg viewBox="0 0 18 18" className="size-[18px]" stroke={blue} fill="none" aria-hidden="true">
    <path d="M1.500 4.500h2v8h-2zM2.500 2v2.500M2.500 12.500V15" />
    <circle cx="10.500" cy="9" r="6.200" fill="#dbe8fd" strokeWidth="1.300" />
    <path d="M10 5.500V9.500l2.500 1.500" stroke="#e8202c" strokeWidth="1.200" />
  </svg>
);
const PencilIcon = () => (
  <svg viewBox="0 0 18 18" className="size-[18px]" stroke={blue} aria-hidden="true">
    <path d="M3 14l1-4 8-8 3 3-8 8z" fill="#dbe8fd" strokeWidth="1.200" />
    <path d="M11 3l3 3 1.500-1.500-3-3z" fill="#e8202c" stroke="none" />
    <path d="M2.500 16h8M12 13h4" strokeWidth="1.200" />
  </svg>
);
const ScreenIcon = () => (
  <svg viewBox="0 0 18 18" className="size-[18px]" stroke={blue} aria-hidden="true">
    <path d="M4.500 2.500h12v8h-12z" fill="#b8d1fa" />
    <path d="M1.500 4.500h12v8h-12z" fill="#dbe8fd" strokeWidth="1.200" />
    <path d="M7.500 12.500v3M4 15.500h7" />
    <path d="M4.500 9.500l2-2 1.500 1.500L10.500 7" stroke="#e8202c" fill="none" />
  </svg>
);
const ForumIcon = () => (
  <svg viewBox="0 0 18 18" className="size-[18px]" fill="none" stroke="#2a75ea" strokeWidth="2.200" aria-hidden="true">
    <path d="M2 3.500h4" stroke="#e8202c" strokeWidth="2" />
    <path d="M2 7h2.500v7.500h2" />
    <path d="M8.500 15V6.500c0-2 1.500-3 3.500-3s4 1 4 3v2.500H9M9 14.500h8" />
  </svg>
);
const SearchIcon = () => (
  <svg viewBox="0 0 18 18" className="size-[18px]" stroke={blue} fill="none" aria-hidden="true">
    <circle cx="9" cy="8.500" r="7" strokeWidth="1.200" />
    <circle cx="9" cy="8.500" r="5" fill="#dbe8fd" strokeWidth=".6" />
    <path d="M13.500 13.500l3 3" strokeWidth="1.600" />
    <path d="M5.500 10l2.500-2 1.500 1.500L13 6.500" stroke="#e8202c" strokeWidth="1.200" />
  </svg>
);
const Glyph = ({ text, tone }: { text: string; tone: string }) => (
  <span className={`text-[15px] font-black leading-none ${tone}`}>{text}</span>
);

type BigButtonProps = { label: string; icon: React.ReactNode; menu?: boolean };

const BigButton = ({ label, icon, menu }: BigButtonProps) => (
  <button className="flex w-[30px] shrink-0 flex-col items-center text-[10px] leading-3 text-[#444]">
    <span className="flex h-[22px] w-full items-center justify-center border border-[#dedfe3] bg-[#fafafa]">
      {icon}
      {menu && (
        <span className="ml-px flex h-full items-center border-l border-[#e4e4e8] pl-px">
          <Caret className="text-[#444]" />
        </span>
      )}
    </span>
    <span className="whitespace-nowrap">{label}</span>
  </button>
);

const SmallLink = ({ children }: { children: React.ReactNode }) => (
  <button className="h-[14px] w-[33px] border border-[#e0e0e6] bg-[#fafafa] text-[10px] leading-3 text-[#5555d6]">
    {children}
  </button>
);

const IndexToolbar = () => (
  <div className="flex h-[41px] shrink-0 items-center gap-[7px] bg-[#efefef] pl-[5px]">
    <BigButton label="应用" icon={<AppsIcon />} />
    <BigButton label="问财" icon={<RobotIcon />} />
    <button aria-label="后退" className="flex h-[33px] w-8 shrink-0 items-center justify-center border border-[#dedfe3] bg-[#fafafa]">
      <YellowArrow className="size-5" />
    </button>
    <div className="flex shrink-0 flex-col gap-1">
      <button aria-label="上一个" className="flex h-[15px] w-[21px] items-center justify-center border border-[#dedfe3] bg-[#fafafa]">
        <YellowArrow className="size-[11px] rotate-90" />
      </button>
      <button aria-label="下一个" className="flex h-[15px] w-[21px] items-center justify-center border border-[#dedfe3] bg-[#fafafa]">
        <YellowArrow className="size-[11px] -rotate-90" />
      </button>
    </div>
    <BigButton label="修正" icon={<HookIcon />} />
    <BigButton label="买入" icon={<Glyph text="买" tone="text-[#ea2c33]" />} />
    <BigButton label="卖出" icon={<Glyph text="卖" tone="text-[#1c9d4e]" />} />
    <BigButton label="模拟" icon={<HammerIcon />} />
    <BigButton label="学投资" icon={<CapIcon />} />
    <BigButton label="自选" icon={<FolderIcon />} menu />
    <BigButton label="F10" icon={<SheetIcon />} menu />
    <BigButton label="周期" icon={<ClockIcon />} menu />
    <BigButton label="画线" icon={<PencilIcon />} menu />
    <BigButton label="多窗" icon={<ScreenIcon />} menu />
    <BigButton label="论股" icon={<ForumIcon />} />
    <BigButton label="选股" icon={<SearchIcon />} menu />
    <div className="grid shrink-0 grid-cols-2 gap-x-[7px] gap-y-1">
      <SmallLink>资讯</SmallLink>
      <SmallLink>竞价</SmallLink>
      <SmallLink>研报</SmallLink>
      <SmallLink>预测</SmallLink>
    </div>
    <button aria-label="更多工具" className="ml-auto flex h-[34px] w-[13px] items-center justify-center border border-[#a5a5a5] bg-[#e4e4e4] text-[#555]">
      <ChevronRight size={12} />
    </button>
  </div>
);

const indexSide = [
  { label: "推荐", height: "h-[47px]" },
  { label: "首页", height: "h-[40px]" },
  { label: "分时图", height: "h-[45px]" },
  { label: "K线图", height: "h-[45px]" },
  { label: "大盘资料", height: "h-[57px]" },
  { label: "自选股", height: "h-[45px]" },
  { label: "综合排名", height: "h-[57px]" },
  { label: "竞价分析", height: "h-[57px]" },
  { label: "更多", height: "h-[45px]" },
];

const IndexSidebar = () => (
  <nav className="flex w-4 shrink-0 flex-col gap-px">
    {indexSide.map((tab, i) => (
      <button
        key={tab.label}
        className={`flex shrink-0 flex-col items-center justify-center text-[10px] leading-3 ${tab.height} ${
          i === 2 ? "bg-[#e00000] text-[#ffd0d0]" : i === 1 ? "bg-[#c3c9d1] text-[#333]" : "bg-[#c6c6c6] text-[#333]"
        }`}
      >
        {i === 0 && <ChevronsRight size={12} strokeWidth={3} className="mb-1" />}
        {tab.label.split("").map((c) => (
          <span key={c}>{c}</span>
        ))}
      </button>
    ))}
  </nav>
);

const IndexPeriods = () => (
  <div className="flex h-4 shrink-0 items-center border-b border-[#262c31] pl-0.5 text-[11px] text-[#b6b8ba]">
    <svg viewBox="0 0 13 10" className="h-[10px] w-[13px] shrink-0" aria-hidden="true">
      <path d="M0 4h6V0l5 5-5 5V6H0zM11 0h2v10h-2z" fill="#cfcfcf" />
    </svg>
    <button className="ml-0.5 h-[15px] bg-[#2a323a] px-1 leading-[15px] text-[#dfe1e3]">分时</button>
    <button className="pl-[5px]">5日</button>
    <button aria-label="选择天数" className="pl-2 pr-1"><Caret className="text-[#777]" /></button>
    {["日", "15日", "周", "月", "季", "年", "1分", "5分", "15分", "更多", "设置"].map((p) => (
      <button key={p} className="whitespace-nowrap border-l border-[#262c31] pl-[3px] pr-[2px] leading-4">
        {p}
      </button>
    ))}
    <div className="ml-auto mr-[57px] flex items-center gap-[6px] whitespace-nowrap text-[10px]">
      <button className="relative">
        九转
        <svg viewBox="0 0 4 4" className="absolute -right-1 top-0 size-1" aria-hidden="true">
          <path d="M0 0h4v4z" fill="#f22" />
        </svg>
      </button>
      <button>数据看盘</button>
      <button>大盘异动</button>
      <button>竞</button>
      <button>加自选</button>
      <button aria-label="收起">
        <svg viewBox="0 0 12 10" className="h-[9px] w-3" aria-hidden="true">
          <path d="M0 0h2v10H0zM12 4H8V0L3 5l5 5V6h4z" fill="#cfcfcf" />
        </svg>
      </button>
      <button aria-label="展开菜单"><Caret className="scale-125 text-[#cfcfcf]" /></button>
    </div>
  </div>
);

const IndexInfo = () => (
  <div className="flex h-[18px] shrink-0 items-center gap-[3px] pb-0.5 pl-[65px] pr-[57px] text-[11px] leading-4 text-[#c9cbcd]">
    <span>深证成指</span>
    <span className="text-[#e5a82c]">领先: 12970.47</span>
    <span className="text-white">最新: 12942.23</span>
    <div className="ml-auto flex items-center gap-[4px] text-[#9a9da0]">
      <button aria-label="设置">
        <svg viewBox="0 0 13 13" className="size-[13px]" fill="none" stroke="currentColor" aria-hidden="true">
          <path d="M4 2h5l3 4.500L9 11H4L1 6.500z" />
          <circle cx="6.500" cy="6.500" r="2" />
        </svg>
      </button>
      <button aria-label="画笔"><Feather size={12} strokeWidth={1.5} className="opacity-60" /></button>
      <button aria-label="显示"><Eye size={13} strokeWidth={2} /></button>
      <button aria-label="删除"><ShoppingBasket size={12} strokeWidth={1.5} className="opacity-60" /></button>
      <button aria-label="拖动"><Hand size={13} strokeWidth={2} /></button>
      <button aria-label="锁定"><Lock size={12} strokeWidth={2} /></button>
      <button aria-label="放大"><CirclePlus size={13} strokeWidth={2} /></button>
      <button aria-label="缩小"><CircleMinus size={13} strokeWidth={2} /></button>
    </div>
  </div>
);

const indexLevels = [
  "13004", "12991", "12979", "12966", "12953", "12940", "12927", "12914", "12901", "12888", "12875",
  "12862", "12850", "12837", "12824", "12811", "12798", "12785", "12772", "12760", "12746",
];
const indexPercents = range(21).map((i) => `${(Math.abs(10 - i) / 10).toFixed(2)}%`);

const indexTone = (i: number) =>
  i < 10 ? "text-[#e8282c]" : i === 10 ? "text-[#e2e2e2]" : "text-[#109a3c]";

const IndexPriceChart = () => (
  <div className="flex min-h-0 flex-[402]">
    <Axis labels={indexLevels} tones={indexTone} side="left" className="w-[65px] pr-0.5" />
    <div className="relative min-w-0 flex-1">
      <Plot box={[772, 98, 567, 402]}>
        <IndexGrid top={98} bottom={500} rows={range(21).map((i) => 98 + Math.round(i * 20.1))} />
        <line x1="772" x2="1339" y1="299" y2="299" stroke="#3a4046" strokeWidth="2" />
        <SignedBars
          values={indexStrength}
          from={809}
          to={1177}
          base={299}
          up="#b8222a"
          down="#12823a"
          width={1.4}
        />
        <Line points={indexPrice} color="#e6e6e6" width={1.4} />
        <Line points={indexLead} color="#d9a02a" width={1.4} />
        <Line points={indexAuction} color="#d4dc7c" width={1.4} />
      </Plot>
      <button
        aria-label="帮助"
        className="absolute left-3 top-[3px] flex size-[11px] items-center justify-center rounded-full border border-[#c0c0c0] text-[9px] leading-none text-[#d0d0d0]"
      >
        ?
      </button>
    </div>
    <Axis labels={indexPercents} tones={indexTone} side="right" className="w-[53px] pl-px" />
  </div>
);

const IndexVolumeChart = () => (
  <div className="flex min-h-0 flex-[99]">
    <Axis
      labels={["", "526723", "351149", "175574", ""]}
      tones={() => "text-[#8f9499]"}
      side="left"
      className="w-[65px] pr-0.5"
    >
      <span className="absolute bottom-0 right-px border border-[#30363b] px-px leading-[11px] text-[#8f9499]">X10</span>
    </Axis>
    <div className="min-w-0 flex-1">
      <Plot box={[772, 500, 567, 99]}>
        <IndexGrid top={500} bottom={599} rows={[500, 525, 550, 574, 599]} />
        <VolumeBars values={auctionVolume} from={774} to={808} base={599} width={1.6} />
        <VolumeBars values={indexVolume} from={808} to={1177} base={599} width={1.4} />
      </Plot>
    </div>
    <Axis
      labels={["", "138321", "92214", "46107", ""]}
      tones={() => "text-[#1cb4c8]"}
      side="right"
      className="w-[53px] pl-px"
    >
      <span className="absolute bottom-0 left-0 border border-[#30363b] px-px leading-[11px] text-[#1cb4c8]">X100</span>
    </Axis>
  </div>
);

const IndexMacd = () => (
  <>
    <div className="flex h-[15px] shrink-0 items-center gap-1 whitespace-nowrap pl-[65px] pr-[53px] text-[11px] leading-[14px] text-[#e2e2e2]">
      <span>MACDFS(12,26,9)</span>
      <span>DIFF: -2.42<span className="text-[#e0262a]"><Arrow>↑</Arrow></span></span>
      <span className="text-[#ead28c]">DEA: -3.39<span className="text-[#e0262a]"><Arrow>↑</Arrow></span></span>
      <span className="text-[#e0262a]">MACDFS: +1.93<Arrow>↑</Arrow></span>
      <button className="ml-auto border-l border-[#262c31] pl-1 text-[#b4b7ba]">指标说明</button>
      <button aria-label="关闭指标" className="ml-1 mr-px text-[#b4b7ba]"><X size={10} /></button>
    </div>
    <div className="flex min-h-0 flex-[143]">
      <Axis
        labels={["+16.75", "+11.98", "+7.05", "+2.11", "-2.82", "-7.58", ""]}
        tones={(i) => (i < 4 ? "text-[#e8282c]" : "text-[#109a3c]")}
        side="left"
        className="w-[65px] pr-0.5"
      />
      <div className="min-w-0 flex-1">
        <Plot box={[772, 614, 567, 143]}>
          <IndexGrid top={614} bottom={757} rows={[614, 637, 661, 685, 709, 733, 757]} />
          <SignedBars
            values={indexMacd}
            from={808}
            to={1177}
            base={695}
            up="#b8222a"
            down="#12823a"
            width={1.4}
          />
          <line x1="808" x2="1176" y1="695" y2="695" stroke="#f01010" strokeWidth="1.400" />
          <Line points={indexDea} color="#dcc27c" width={1.4} />
          <Line points={indexDiff} color="#e6e6e6" width={1.4} />
        </Plot>
      </div>
      <div className="w-[53px] shrink-0" />
    </div>
    <div className="flex h-[11px] shrink-0 overflow-hidden text-[11px] leading-4 text-[#e0404a]">
      <span className="flex w-[65px] justify-end">09:15</span>
      <div className="grid min-w-0 flex-1 grid-cols-[36fr_130fr_129fr_129fr_139fr_4fr]">
        {["09:30", "10:30", "11:30", "14:00", "14:57"].map((t) => (
          <span key={t} className="flex justify-end">
            {t}
          </span>
        ))}
      </div>
      <span className="w-[53px]">15:00</span>
    </div>
  </>
);

const IndexApp = () => (
  <section className="flex min-h-0 min-w-0">
    <div className="flex min-w-0 flex-1 flex-col bg-[#11161a]">
      <IndexTitleBar />
      <IndexToolbar />
      <div className="flex min-h-0 flex-1 pl-px">
        <IndexSidebar />
        <main className="flex min-w-0 flex-1 flex-col">
          <IndexPeriods />
          <IndexInfo />
          <IndexPriceChart />
          <IndexVolumeChart />
          <IndexMacd />
        </main>
      </div>
    </div>
    <div className="w-0.5 shrink-0 bg-[#6f6f73]" />
    <div className="w-1 shrink-0 bg-linear-to-b from-[#c9dcea] via-[#7fa6c4] via-40% to-[#dfe0e8]" />
  </section>
);

const App = () => (
  <div className="grid h-screen grid-cols-[690fr_709fr] grid-rows-1 overflow-hidden bg-black font-['Noto_Sans_CJK_SC',sans-serif]">
    <StockApp />
    <IndexApp />
  </div>
);

export default App;
